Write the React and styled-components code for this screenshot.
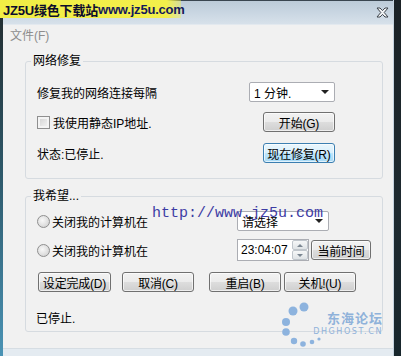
import React from 'react';
import styled, { createGlobalStyle } from 'styled-components';

const GlobalStyle = createGlobalStyle`
  html, body {
    margin: 0;
    padding: 0;
    background: #141c20;
  }
  * {
    box-sizing: border-box;
  }
`;

const FONT = `"Liberation Sans", "Noto Sans CJK SC", sans-serif`;

const Screen = styled.div`
  position: relative;
  width: 401px;
  height: 356px;
  display: flex;
  overflow: hidden;
  background: linear-gradient(180deg, #1b2226 0%, #1e2a30 60%, #18262c 100%);
  font-family: ${FONT};
  font-size: 12px;
  color: #000;
`;

const LeftEdge = styled.div`
  width: 3px;
  background: linear-gradient(180deg, #222a2c 0%, #2e5a6c 50%, #4a93b5 100%);
`;

const Window = styled.div`
  position: relative;
  width: 391px;
  height: 356px;
  display: flex;
  flex-direction: column;
  background: #f1f1f1;
  border-right: 1px solid #c5d3df;
`;

const TitleBar = styled.div`
  height: 25px;
  border-top: 1px solid #3a4650;
  background: linear-gradient(180deg, #bccbd8 0%, #c9d6e2 50%, #d7e1ea 100%);
  display: flex;
  align-items: center;
  justify-content: flex-end;
  padding: 0 4px 0 6px;
  border-bottom: 1px solid #e3e9ef;
`;

const CloseIcon = () => (
  <svg width="13" height="11" viewBox="0 0 13 11">
    <path
      d="M1 1 H4 L6.5 3.6 L9 1 H12 L8.2 5.5 L12 10 H9 L6.5 7.4 L4 10 H1 L4.8 5.5 Z"
      fill="#f4f6f8"
      stroke="#3c434a"
      strokeWidth="1"
      strokeLinejoin="round"
    />
  </svg>
);

const MenuBar = styled.div`
  height: 18px;
  display: flex;
  align-items: center;
  padding-left: 7px;
  color: #8d8d8d;
`;

const Body = styled.div`
  flex: 1;
  display: flex;
  flex-direction: column;
  padding: 0 10px 0 22px;
`;

const Group = styled.div`
  position: relative;
  margin-top: ${(p) => p.$mt}px;
  height: ${(p) => p.$h}px;
  border: 1px solid #d6dbe0;
  border-radius: 3px;
  padding: ${(p) => p.$pt}px ${(p) => p.$pr}px 0 11px;
  display: flex;
  flex-direction: column;
  gap: ${(p) => p.$gap}px;
`;

const Legend = styled.span`
  position: absolute;
  top: -9px;
  left: 5px;
  padding: 0 2px;
  background: #f1f1f1;
  line-height: 16px;
`;

const Row = styled.div`
  height: ${(p) => p.$h || 20}px;
  display: flex;
  align-items: center;
  justify-content: ${(p) => (p.$spread ? 'space-between' : 'flex-start')};
  margin-top: ${(p) => p.$mt || 0}px;

  & > * {
    flex-shrink: 0;
  }
`;

const Label = styled.span`
  display: flex;
  align-items: center;
  white-space: nowrap;
  width: ${(p) => (p.$w ? `${p.$w}px` : 'auto')};
`;

const Button = styled.button`
  width: ${(p) => p.$w || 72}px;
  height: 20px;
  margin-left: ${(p) => p.$ml || 0}px;
  padding: 0;
  font-family: ${FONT};
  font-size: 12px;
  letter-spacing: -0.2px;
  white-space: nowrap;
  color: #000;
  border-radius: 3px;
  border: 1px solid ${(p) => (p.$active ? '#3c7fb1' : '#707070')};
  background: ${(p) =>
    p.$active
      ? 'linear-gradient(180deg, #eaf6fd 0%, #d9f0fc 50%, #bee6fd 51%, #a7d9f5 100%)'
      : 'linear-gradient(180deg, #f2f2f2 0%, #ebebeb 50%, #dddddd 51%, #cfcfcf 100%)'};
  box-shadow: inset 0 0 0 1px rgba(255, 255, 255, 0.65);
`;

const Combo = styled.div`
  width: ${(p) => p.$w}px;
  height: 20px;
  background: #fff;
  border: 1px solid #abadb3;
  border-radius: 2px;
  display: flex;
  align-items: center;
  justify-content: space-between;
  padding: 0 5px 0 4px;
`;

const Arrow = styled.span`
  width: 0;
  height: 0;
  border-left: 4px solid transparent;
  border-right: 4px solid transparent;
  border-top: 4px solid #222;
`;

const CheckBox = styled.span`
  width: 13px;
  height: 13px;
  margin-right: 3px;
  border: 1px solid #8f8f8f;
  background: linear-gradient(135deg, #cfcfcf 0%, #e8e8e8 60%, #f6f6f6 100%);
  box-shadow: inset 0 0 0 2px #f4f4f4;
`;

const Radio = styled.span`
  width: 13px;
  height: 13px;
  margin-right: 2px;
  border-radius: 50%;
  border: 1px solid #8f8f8f;
  background: radial-gradient(circle at 40% 40%, #f8f8f8 0%, #e0e0e0 55%, #c8c8c8 100%);
`;

const TimeBox = styled.div`
  width: 72px;
  height: 22px;
  background: #fff;
  border: 1px solid #abadb3;
  display: flex;
  align-items: center;
  justify-content: space-between;
  padding-left: 3px;
  font-size: 12px;
`;

const Spinner = styled.div`
  width: 16px;
  height: 20px;
  display: flex;
  flex-direction: column;
`;

const SpinBtn = styled.div`
  flex: 1;
  display: flex;
  align-items: center;
  justify-content: center;
  border: 1px solid #c0c6cc;
  border-radius: 2px;
  background: linear-gradient(180deg, #f6f7f8 0%, #dfe3e6 100%);

  &::after {
    content: '';
    border-left: 3px solid transparent;
    border-right: 3px solid transparent;
    ${(p) => (p.$up ? 'border-bottom: 3px solid #7b8691;' : 'border-top: 3px solid #7b8691;')}
  }
`;

const UrlMark = styled.span`
  position: absolute;
  top: 8px;
  left: 126px;
  font-family: "Liberation Mono", monospace;
  font-size: 15px;
  color: #3d3ca4;
  white-space: nowrap;
  pointer-events: none;
`;

const Status = styled.div`
  margin-top: 9px;
  margin-left: -1px;
`;

const SiteMark = styled.div`
  position: absolute;
  top: 0;
  left: 0;
  width: 181px;
  height: 18px;
  background: linear-gradient(90deg, #f1ee45 0%, #f3f04b 92%, rgba(243, 240, 75, 0.4) 100%);
  display: flex;
  align-items: center;
  padding-left: 3px;
  font-family: ${FONT};
  font-weight: bold;
  font-size: 13px;
  color: #0c0c2c;
  white-space: nowrap;
  letter-spacing: -0.2px;

  b {
    color: #141a5a;
  }
`;

const Logo = styled.div`
  position: absolute;
  right: 10px;
  bottom: 9px;
  display: flex;
  align-items: flex-start;
`;

const LogoText = styled.div`
  margin-left: -8px;
  margin-top: 9px;
  display: flex;
  flex-direction: column;
  align-items: flex-end;
  color: #8fb2da;

  strong {
    font-family: "Noto Sans CJK SC", sans-serif;
    font-size: 13px;
    letter-spacing: 1px;
    line-height: 15px;
  }

  small {
    font-family: "DejaVu Sans", sans-serif;
    font-size: 8px;
    letter-spacing: 1.6px;
    line-height: 10px;
    margin-top: 2px;
  }
`;

const LogoDots = () => (
  <svg width="42" height="46" viewBox="0 0 42 46">
    <g fill="#8db3de">
      <circle cx="25" cy="6" r="4.5" />
      <circle cx="14" cy="10" r="4.5" />
      <circle cx="7" cy="21" r="4" />
      <circle cx="7" cy="31" r="3.8" />
      <circle cx="15" cy="40" r="3.2" />
      <circle cx="24" cy="43" r="2.8" />
      <circle cx="33" cy="41" r="2.3" />
      <circle cx="40" cy="38" r="1.6" />
    </g>
  </svg>
);

const BottomFrame = styled.div`
  height: 8px;
  background: #e4ebf1;
  border-top: 1px solid #d6dde3;
`;

function App() {
  return (
    <>
      <GlobalStyle />
      <Screen>
        <LeftEdge />
        <Window>
          <TitleBar>
            <CloseIcon />
          </TitleBar>
          <MenuBar>文件(F)</MenuBar>
          <Body>
            <Group $mt={18} $h={118} $pt={20} $pr={47} $gap={10}>
              <Legend>网络修复</Legend>
              <Row $spread>
                <Label>修复我的网络连接每隔</Label>
                <Combo $w={86}>
                  <span>1 分钟.</span>
                  <Arrow />
                </Combo>
              </Row>
              <Row $spread>
                <Label>
                  <CheckBox />
                  我使用静态IP地址.
                </Label>
                <Button>开始(G)</Button>
              </Row>
              <Row $spread $mt={1}>
                <Label>状态:已停止.</Label>
                <Button $active>现在修复(R)</Button>
              </Row>
            </Group>
            <Group $mt={17} $h={136} $pt={14} $pr={8} $gap={8}>
              <Legend>我希望...</Legend>
              <Row>
                <Label $w={200}>
                  <Radio />
                  关闭我的计算机在
                </Label>
                <Combo $w={92}>
                  <span>请选择</span>
                  <Arrow />
                </Combo>
              </Row>
              <Row $h={22}>
                <Label $w={200}>
                  <Radio />
                  关闭我的计算机在
                </Label>
                <TimeBox>
                  <span>23:04:07</span>
                  <Spinner>
                    <SpinBtn $up />
                    <SpinBtn />
                  </Spinner>
                </TimeBox>
                <Button $w={60} $ml={2}>当前时间</Button>
              </Row>
              <Row $mt={3}>
                <Button $w={73} $ml={1}>设定完成(D)</Button>
                <Button $ml={11}>取消(C)</Button>
                <Button $ml={15}>重启(B)</Button>
                <Button $ml={3}>关机!(U)</Button>
              </Row>
              <Status>已停止.</Status>
              <UrlMark>http://www.jz5u.com</UrlMark>
            </Group>
          </Body>
          <BottomFrame />
          <Logo>
            <LogoDots />
            <LogoText>
              <strong>东海论坛</strong>
              <small>DHGHOST.CN</small>
            </LogoText>
          </Logo>
        </Window>
        <SiteMark>
          JZ5U绿色下载站<b>www.jz5u.com</b>
        </SiteMark>
      </Screen>
    </>
  );
}

export default App;
